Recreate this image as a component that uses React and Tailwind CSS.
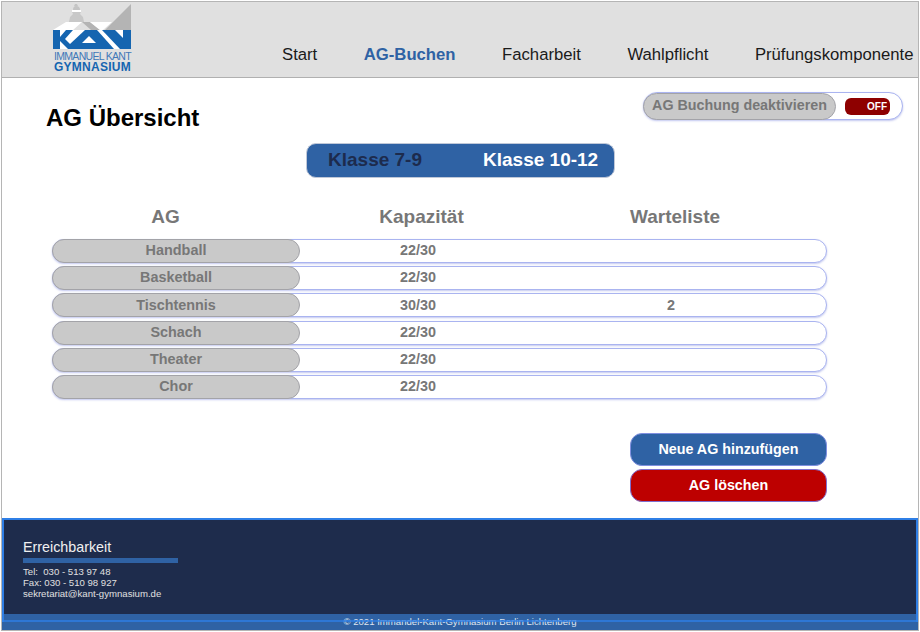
const navItems = ['Start', 'AG-Buchen', 'Facharbeit', 'Wahlpflicht', 'Prüfungskomponente']

const rows = [
  { name: 'Handball', cap: '22/30', wait: '' },
  { name: 'Basketball', cap: '22/30', wait: '' },
  { name: 'Tischtennis', cap: '30/30', wait: '2' },
  { name: 'Schach', cap: '22/30', wait: '' },
  { name: 'Theater', cap: '22/30', wait: '' },
  { name: 'Chor', cap: '22/30', wait: '' },
]

const Logo = () => (
  <div className="-mt-[2px] flex w-[79px] flex-col">
    <svg width="79" height="49" viewBox="0 0 79 49" className="block">
      {/* roof and dome */}
      <path d="M0 30 L13 22 L29 22 L20 30Z" fill="#ffffff" />
      <path d="M29 22 L37 22 L47 30 L38 30Z" fill="#b4b4b4" />
      <path d="M37 22 L59 22 L50 30 L47 30Z" fill="#ffffff" />
      <path d="M78 4 L78 30 L52 30Z" fill="#b4b4b4" />
      <path d="M22 4 L24 4 L25 6 L21 6Z" fill="#c4c4c4" />
      <path d="M20 10 Q20 6 23 6 Q27 6 27 10Z" fill="#c4c4c4" />
      <path d="M19 10 H28 V12 H19Z" fill="#ffffff" />
      <path d="M16 22 L17 17 L20 14 L19 12 H28 L27 14 L30 17 L31 22Z" fill="#c8c8c8" />
      {/* blue block with the white cuts of the letters */}
      <rect x="0" y="30" width="78" height="19" fill="#1565b0" />
      <path d="M7 30 H13 L7 37Z M7 41 L15 49 H7Z" fill="#ffffff" />
      <path d="M20 30 H32 L17 44 L12 39Z" fill="#ffffff" />
      <path d="M29 43 L36 36 L43 43Z" fill="#ffffff" />
      <path d="M44 30 H49 L67 49 H61Z" fill="#ffffff" />
      <path d="M62 30 H70 V38Z" fill="#ffffff" />
    </svg>
    <div className="mt-[2px] text-center text-[10.5px] leading-[10px] tracking-[-0.7px] whitespace-nowrap text-[#4178b8]">IMMANUEL KANT</div>
    <div className="mt-[2px] text-center text-[12px] leading-[9px] font-bold tracking-[0.25px] whitespace-nowrap text-[#1565b0]">GYMNASIUM</div>
  </div>
)

const Row = ({ name, cap, wait }) => (
  <div className="flex h-[24px] w-[775px] items-center rounded-full border border-[#aab4f0] bg-white shadow-[0_1px_2px_rgba(120,130,220,0.45)]">
    <div className="-ml-px flex h-[24px] w-[248px] shrink-0 items-center justify-center rounded-full border border-[#a3a3a8] bg-[#c9c9c9] text-[14.4px] font-bold text-[#777777]">
      {name}
    </div>
    <div className="w-[236px] text-center text-[14.4px] font-bold text-[#777777]">{cap}</div>
    <div className="w-[270px] text-center text-[14.4px] font-bold text-[#777777]">{wait}</div>
  </div>
)

export default function App() {
  return (
    <div className="h-[632px] w-[920px] overflow-hidden bg-white p-px font-['Liberation_Sans',Arial,sans-serif]">
      <div className="flex h-full flex-col border-x border-t border-[#b5b5b5]">
        <header className="flex h-[76px] shrink-0 border-b border-[#b0b0b0] bg-[#e0e0e0]">
          <div className="ml-[51px]">
            <Logo />
          </div>
          <nav className="mt-[43px] ml-[150px] flex gap-[46.5px] text-[16.7px] leading-[20px] whitespace-nowrap text-[#1a1a1a]">
            {navItems.map((item) => (
              <span key={item} className={item === 'AG-Buchen' ? 'font-bold text-[#2f62a4]' : ''}>
                {item}
              </span>
            ))}
          </nav>
        </header>

        <main className="flex flex-1 flex-col bg-white pl-[50px]">
          <div className="relative">
            <h1 className="mt-[25px] -ml-[6px] text-[24px] leading-[30px] font-bold text-black">AG Übersicht</h1>
            <div className="absolute top-[14px] right-[15px] flex h-[28px] w-[260px] items-center rounded-full border border-[#aab4f0] bg-white shadow-[0_1px_2px_rgba(120,130,220,0.45)]">
              <div className="-ml-px flex h-[27px] w-[193px] items-center justify-center rounded-full border border-[#a3a3a8] bg-[#c9c9c9] text-[14.3px] font-bold whitespace-nowrap text-[#777777]">
                AG Buchung deaktivieren
              </div>
              <div className="ml-[9px] flex h-[17px] w-[45px] items-center justify-end rounded-[6px] bg-[#8e0000] pr-[3px] text-[10px] font-bold text-white">
                OFF
              </div>
            </div>
          </div>

          <div className="mt-[10px] ml-[254px] flex h-[35px] w-[309px] items-center rounded-[10px] border border-[#c0c8d8] bg-[#2f62a4] text-[19px] font-bold whitespace-nowrap">
            <span className="ml-[21px] text-[#1d2b4d]">Klasse 7-9</span>
            <span className="ml-[61px] text-white">Klasse 10-12</span>
          </div>

          <div className="mt-[27px] flex h-[24px] items-center text-[19px] font-bold text-[#777777]">
            <span className="w-[227px] text-center">AG</span>
            <span className="w-[285px] text-center">Kapazität</span>
            <span className="w-[222px] text-center">Warteliste</span>
          </div>

          <div className="mt-[10px] flex flex-col gap-[3.2px]">
            {rows.map((row) => (
              <Row key={row.name} {...row} />
            ))}
          </div>

          <div className="mt-[34px] ml-[578px] flex w-[197px] flex-col gap-[3px]">
            <button className="h-[33px] rounded-[12px] border border-[#7f8fe0] bg-[#2f62a4] text-[14.3px] font-bold text-white">
              Neue AG hinzufügen
            </button>
            <button className="h-[33px] rounded-[12px] border border-[#7f6fd0] bg-[#bd0000] text-[14.3px] font-bold text-white">
              AG löschen
            </button>
          </div>
        </main>

        <footer className="relative h-[113px] shrink-0 border-b border-[#b5b5b5] bg-[#2f62a4]">
          <div className="h-[104px] border-2 border-[#2f7fe6] bg-[#1e2c4c] pt-[18px] pl-[19px]">
            <div className="text-[14.3px] leading-[18px] text-[#f0f0f0]">Erreichbarkeit</div>
            <div className="mt-[2px] h-[5px] w-[155px] bg-[#2f62a4]" />
            <div className="mt-[3px] text-[9.6px] leading-[11px] whitespace-pre text-[#e0e0e0]">
              {'Tel:  030 - 513 97 48\nFax: 030 - 510 98 927\nsekretariat@kant-gymnasium.de'}
            </div>
          </div>
          <div className="absolute inset-x-[2px] top-[96px] h-[16px] bg-[#2f62a4] text-center text-[9.6px] leading-[16px] text-[#dfe6f2]">
            © 2021 Immandel-Kant-Gymnasium Berlin Lichtenberg
            <div className="absolute -inset-x-[2px] top-[6px] h-[2px] bg-[#2f7fe6]/75" />
          </div>
        </footer>
      </div>
    </div>
  )
}
